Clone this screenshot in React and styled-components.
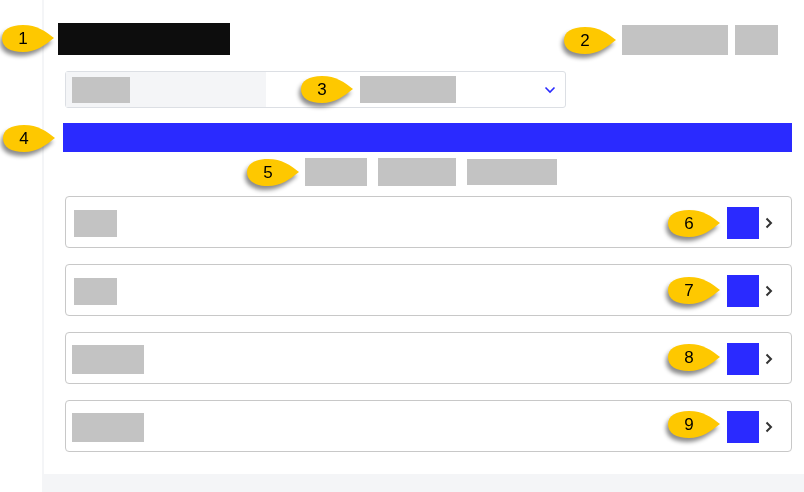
import React from 'react';
import styled, { createGlobalStyle } from 'styled-components';

const GlobalStyle = createGlobalStyle`
    body {
        margin: 0;
        background: #ffffff;
        font-family: "Liberation Sans", Arial, sans-serif;
    }
`;

const callouts = [
    { n: 1, x: 1, y: 24 },
    { n: 2, x: 563, y: 26 },
    { n: 3, x: 300, y: 75 },
    { n: 4, x: 2, y: 124 },
    { n: 5, x: 246, y: 158 },
    { n: 6, x: 667, y: 209 },
    { n: 7, x: 667, y: 276 },
    { n: 8, x: 667, y: 343 },
    { n: 9, x: 667, y: 410 },
];

const rows = [
    { label: 43, labelH: 27, pad: 9 },
    { label: 43, labelH: 27, pad: 9 },
    { label: 72, labelH: 29, pad: 7 },
    { label: 72, labelH: 29, pad: 7 },
];

const Callout = ({ n, x, y }) => (
    <CalloutStyled $x={x} $y={y}>
        <svg width='54' height='30' viewBox='0 0 54 30'>
            <path
                d='M53 14 C44 7 36 1 22 1 C9 1 1 6 1 14 C1 23 9 28 22 28 C35 28 44 21 53 14 Z'
                fill='#fec800'
            />
        </svg>
        <span>{n}</span>
    </CalloutStyled>
);

const ChevronDown = () => (
    <svg width='12' height='8' viewBox='0 0 12 8'>
        <polyline points='1.5,1.5 6,6 10.5,1.5' fill='none' stroke='#2a2aff' strokeWidth='1.6' />
    </svg>
);

const ChevronRight = () => (
    <svg width='8' height='12' viewBox='0 0 8 12'>
        <polyline points='1.5,1.5 6,6 1.5,10.5' fill='none' stroke='#333333' strokeWidth='2' />
    </svg>
);

const App = () => {
    return (
        <Page>
            <GlobalStyle />
            <Side />
            <Main>
                <Panel>
                    <Header>
                        <Title />
                        <Actions>
                            <Block $w={106} $h={30} />
                            <Block $w={43} $h={30} />
                        </Actions>
                    </Header>
                    <Select>
                        <SelectLeft>
                            <Block $w={58} $h={26} />
                        </SelectLeft>
                        <SelectValue>
                            <Block $w={96} $h={27} />
                        </SelectValue>
                        <ChevronDown />
                    </Select>
                    <Banner />
                    <Tabs>
                        <Block $w={62} $h={28} />
                        <Block $w={78} $h={28} />
                        <Block $w={90} $h={26} />
                    </Tabs>
                    <List>
                        {rows.map((r, i) => (
                            <Card key={i} $pad={r.pad}>
                                <Block $w={r.label} $h={r.labelH} />
                                <CardEnd>
                                    <Square />
                                    <ChevronRight />
                                </CardEnd>
                            </Card>
                        ))}
                    </List>
                </Panel>
            </Main>
            {callouts.map((c) => (
                <Callout key={c.n} {...c} />
            ))}
        </Page>
    );
};

export default App;

const Page = styled.div`
    position: relative;
    display: flex;
    width: 804px;
    height: 492px;
    overflow: hidden;
`;

const Side = styled.div`
    width: 42px;
    flex-shrink: 0;
    background: #ffffff;
`;

const Main = styled.div`
    flex: 1;
    background: #f4f5f7;
    padding: 0 0 18px 2px;
`;

const Panel = styled.div`
    height: 474px;
    box-sizing: border-box;
    background: #ffffff;
    padding: 23px 12px 0 19px;
    display: flex;
    flex-direction: column;
`;

const Header = styled.div`
    display: flex;
    justify-content: space-between;
    align-items: flex-end;
    height: 32px;
`;

const Title = styled.div`
    width: 172px;
    height: 32px;
    margin-left: -5px;
    background: #0d0d0d;
`;

const Actions = styled.div`
    display: flex;
    gap: 7px;
    margin-right: 14px;
`;

const Block = styled.div`
    width: ${(p) => p.$w}px;
    height: ${(p) => p.$h}px;
    background: #c3c3c3;
    flex-shrink: 0;
`;

const Select = styled.div`
    display: flex;
    align-items: center;
    width: 501px;
    height: 37px;
    box-sizing: border-box;
    margin: 16px 0 0 2px;
    border: 1px solid #dcdfe4;
    border-radius: 3px;
    padding-right: 9px;
`;

const SelectLeft = styled.div`
    width: 200px;
    height: 100%;
    box-sizing: border-box;
    background: #f4f5f7;
    padding: 5px 6px;
`;

const SelectValue = styled.div`
    flex: 1;
    padding: 0 0 0 94px;
`;

const Banner = styled.div`
    height: 29px;
    margin-top: 15px;
    background: #2a2aff;
`;

const Tabs = styled.div`
    display: flex;
    align-items: center;
    gap: 11px;
    margin-top: 6px;
    padding-left: 242px;
    height: 28px;
`;

const List = styled.div`
    display: flex;
    flex-direction: column;
    gap: 16px;
    margin: 10px 0 0 2px;
`;

const Card = styled.div`
    display: flex;
    align-items: center;
    justify-content: space-between;
    height: 52px;
    box-sizing: border-box;
    border: 1px solid #c8c8c8;
    border-radius: 4px;
    padding: 2px 18px 0 ${(p) => p.$pad - 1}px;
`;

const CardEnd = styled.div`
    display: flex;
    align-items: center;
    gap: 6px;
`;

const Square = styled.div`
    width: 32px;
    height: 32px;
    background: #2a2aff;
`;

const CalloutStyled = styled.div`
    position: absolute;
    left: ${(p) => p.$x}px;
    top: ${(p) => p.$y}px;
    width: 54px;
    height: 30px;
    filter: drop-shadow(-2px 4px 2px rgba(0, 0, 0, 0.45));
    svg {
        display: block;
    }
    span {
        position: absolute;
        left: 0;
        top: 5px;
        width: 44px;
        text-align: center;
        font-size: 17px;
        line-height: 20px;
        color: #000000;
    }
`;
